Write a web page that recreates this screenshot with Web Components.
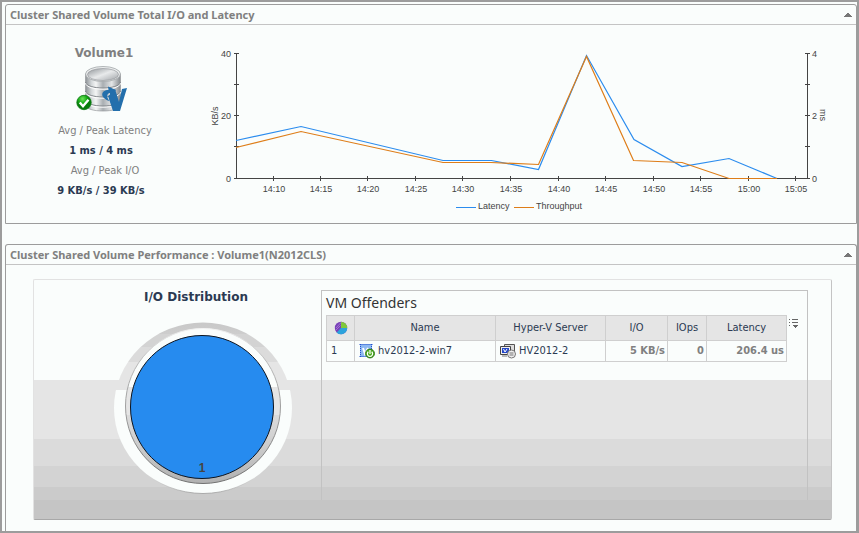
<!DOCTYPE html>
<html lang="en">
<head>
<meta charset="utf-8">
<title>Cluster Shared Volume</title>
<style>
  html { height: 100%; }
  body { margin: 0; min-height: 100%; display: grid; background: #fafdfc; color: #2b3a52;
    font: 11px/14px "DejaVu Sans Condensed", "DejaVu Sans", sans-serif; }
</style>
</head>
<body>
<csv-dashboard></csv-dashboard>

<script>
function define(name, html) {
  const template = document.createElement('template');
  template.innerHTML = '<style>*{box-sizing:border-box}</style>' + html;
  customElements.define(name, class extends HTMLElement {
    constructor() {
      super();
      this.attachShadow({ mode: 'open' }).append(template.content.cloneNode(true));
    }
  });
}

define('csv-panel', `
<style>
  :host { display: flex; flex-direction: column; box-sizing: border-box; border: 1px solid #9c9c9c;
    border-radius: 3px 3px 0 0; min-width: 0; }
  header { display: flex; align-items: center; justify-content: space-between; height: 20px;
    padding: 0 4px; border-bottom: 1px solid #c4c4c4; }
  h2 { margin: 0; font: bold 11px/16px "Noto Sans", sans-serif; color: #808080; }
  button { display: grid; place-items: center; width: 16px; height: 16px; margin: 0 -4px 0 0; padding: 0;
    border: 0; background: none; }
  .body { flex: 1; display: grid; }
</style>
<header><h2><slot name="title"></slot></h2>
  <button aria-label="Collapse"><svg width="8" height="4" viewBox="0 0 8 4" shape-rendering="crispEdges"><path d="M3 0h2v1h1v1h1v1h1v1H0V3h1V2h1V1h1z" fill="#777"/></svg></button></header>
<div class="body"><slot></slot></div>`);

define('csv-volume-icon', `
<style>:host { display: block; height: 49px; } svg { display: block; }</style>
<svg width="52" height="49" viewBox="0 0 52 49" aria-hidden="true">
  <defs>
    <linearGradient id="m"><stop offset="0" stop-color="#8d9296"/><stop offset=".18" stop-color="#d6dadc"/><stop offset=".3" stop-color="#f4f5f5"/><stop offset=".5" stop-color="#a9aeb2"/><stop offset=".75" stop-color="#e4e6e7"/><stop offset="1" stop-color="#85898d"/></linearGradient>
    <linearGradient id="t" x2="1" y2="1"><stop offset="0" stop-color="#8f9498"/><stop offset=".5" stop-color="#e8eaeb"/><stop offset="1" stop-color="#a0a4a8"/></linearGradient>
    <radialGradient id="g" cx=".4" cy=".25"><stop offset="0" stop-color="#6fe45a"/><stop offset=".6" stop-color="#18ab18"/><stop offset="1" stop-color="#087c0c"/></radialGradient>
  </defs>
  <path d="M9.500 9v31c0 8 35 8 35 0V9z" fill="url(#m)" stroke="#96999c" stroke-width=".7"/>
  <path d="M9.500 17c1 8 34 8 35 0M9.500 26c1 8 34 8 35 0M9.500 35c1 8 34 8 35 0" fill="none" stroke="#85898d" stroke-width="1"/>
  <path d="M9.500 18.200c1 8 34 8 35 0M9.500 27.200c1 8 34 8 35 0M9.500 36.200c1 8 34 8 35 0" fill="none" stroke="#fff" stroke-width="1"/>
  <ellipse cx="27" cy="9" rx="17.500" ry="7.500" fill="#eceeee" stroke="#a0a4a7" stroke-width=".8"/>
  <ellipse cx="27" cy="9.500" rx="15.500" ry="6" fill="url(#t)" stroke="#8d9195" stroke-width=".6"/>
  <path d="M32 21.500l8 3.500-6 6v-3c-3 0-4 4-.500 8-10-3-9-11-1-11z" fill="#236fac"/>
  <path d="M32 31l4-3 3-4 4 13 3-13 5-1-7 23h-7z" fill="#236fac"/>
  <circle cx="8" cy="37.500" r="7.200" fill="url(#g)" stroke="#0a7a10" stroke-width=".8"/>
  <path d="M3.800 37.500l3.200 3.700 5.500-6.500" fill="none" stroke="#fff" stroke-width="2.400"/>
</svg>`);

define('csv-volume-summary', `
<style>
  :host { display: flex; flex-direction: column; align-items: center; padding: 20px 4px 0 0; }
  h3 { margin: 0 0 4px; font: bold 12px/16px "DejaVu Sans", sans-serif; color: #808080; }
  csv-volume-icon { margin: 0 4px 7px 0; }
  dl { margin: 0; padding-right: 6px; text-align: center; line-height: 20px; }
  dt { color: #808080; padding-left: 8px; }
  dd { margin: 0; font-weight: bold; }
</style>
<h3>Volume1</h3>
<csv-volume-icon></csv-volume-icon>
<dl><dt>Avg / Peak Latency</dt><dd>1 ms / 4 ms</dd><dt>Avg / Peak I/O</dt><dd>9 KB/s / 39 KB/s</dd></dl>`);

define('csv-line-chart', `
<style>
  :host { display: block; min-width: 0; }
  svg { display: block; width: 100%; font: 9px "Liberation Sans", sans-serif; fill: #444; }
  .axis { fill: none; stroke: #444; shape-rendering: crispEdges; }
  .line { fill: none; stroke-width: 1.200; }
  .x, .unit { text-anchor: middle; } .l { text-anchor: end; }
</style>
<svg viewBox="206 25 650 198" role="img" aria-label="Latency and throughput">
  <path class="axis" d="M236.500 53v126M234 53.500h5M234 84.500h5M234 115.500h5M234 146.500h5M234 178.500h576M807.500 53v126M805 53.500h5M805 84.500h5M805 115.500h5M805 146.500h5M273.500 176v5M320.500 176v5M367.500 176v5M415.500 176v5M462.500 176v5M510.500 176v5M558.500 176v5M605.500 176v5M653.500 176v5M700.500 176v5M748.500 176v5M795.500 176v5"/>
  <path class="line" stroke="#2b8cee" d="M236 140.500L301 126.500 443 160.500H491.500L538.500 169.500 586.500 55.500 634 139.500 682 166.500 729 158.500 777 178.500"/>
  <path class="line" stroke="#de7d18" d="M236 147.500L301 131.500 443 162.500H491L538.500 164.500 586.500 56.500 633.500 160.500 682 162.500 729 178.500H777"/>
  <g class="l"><text x="231" y="57">40</text><text x="231" y="119">20</text><text x="231" y="182">0</text></g>
  <text x="812" y="57">4</text><text x="812" y="119">2</text><text x="812" y="182">0</text>
  <text class="unit" transform="translate(218 116) rotate(-90)">KB/s</text>
  <text class="unit" transform="translate(820 115) rotate(90)">ms</text>
  <g class="x"><text x="274" y="192">14:10</text><text x="321" y="192">14:15</text><text x="368" y="192">14:20</text><text x="416" y="192">14:25</text><text x="463" y="192">14:30</text><text x="511" y="192">14:35</text><text x="559" y="192">14:40</text><text x="606" y="192">14:45</text><text x="654" y="192">14:50</text><text x="701" y="192">14:55</text><text x="749" y="192">15:00</text><text x="796" y="192">15:05</text></g>
  <path d="M456 207.500h20" stroke="#2b8cee"/><text x="478" y="209">Latency</text>
  <path d="M514 207.500h20" stroke="#de7d18"/><text x="536" y="209">Throughput</text>
</svg>`);

define('csv-distribution', `
<style>
  :host { display: flex; flex-direction: column; align-items: center; padding-top: 8px; }
  h3 { margin: 0 0 15px; font: bold 12px/18px "DejaVu Sans", sans-serif; }
  svg { display: block; margin-left: 14px; }
</style>
<h3>I/O Distribution</h3>
<svg width="180" height="174" viewBox="113 321 180 174" role="img" aria-label="I/O distribution">
  <defs>
    <linearGradient id="o" gradientUnits="userSpaceOnUse" x1="0" y1="322" x2="0" y2="494">
      <stop offset="0" stop-color="#c8c8c8"/><stop offset=".07" stop-color="#cdcdcd"/><stop offset=".07" stop-color="#d3d3d3"/><stop offset=".145" stop-color="#d3d3d3"/><stop offset=".145" stop-color="#dbdbdb"/><stop offset=".23" stop-color="#dbdbdb"/><stop offset=".23" stop-color="#e5e5e5"/><stop offset=".395" stop-color="#e5e5e5"/><stop offset=".395" stop-color="#fafdfc"/><stop offset="1" stop-color="#fafdfc"/></linearGradient>
    <linearGradient id="i" gradientUnits="userSpaceOnUse" x1="0" y1="328" x2="0" y2="484">
      <stop offset="0" stop-color="#fafdfc"/><stop offset=".38" stop-color="#fafdfc"/><stop offset=".38" stop-color="#e5e5e5"/><stop offset=".56" stop-color="#e5e5e5"/><stop offset=".56" stop-color="#dbdbdb"/><stop offset=".68" stop-color="#d3d3d3"/><stop offset=".82" stop-color="#c5c5c5"/><stop offset="1" stop-color="#b0b0b0"/></linearGradient>
    <linearGradient id="e" x2="0" y2="1"><stop offset="0" stop-color="#f2f2f2"/><stop offset=".2" stop-color="#bbb"/><stop offset="1" stop-color="#707070"/></linearGradient>
    <linearGradient id="b" x2="0" y2="1"><stop offset=".9" stop-color="#c5c5c5" stop-opacity="0"/><stop offset="1" stop-color="#aaa"/></linearGradient>
  </defs>
  <ellipse cx="203" cy="408" rx="89" ry="85.500" fill="url(#o)" stroke="url(#b)"/>
  <circle cx="203" cy="406" r="77.500" fill="url(#i)" stroke="url(#e)"/>
  <circle cx="202" cy="407" r="71.500" fill="#268bef" stroke="#0c1420"/>
  <text x="202" y="472" text-anchor="middle" font-family="Liberation Sans, sans-serif" font-weight="bold" font-size="12" fill="#444">1</text>
</svg>`);

define('csv-offenders', `
<style>
  :host { display: block; box-sizing: border-box; padding: 3px 4px; border: 1px solid #c2c2c2; border-bottom: 0; }
  h3 { margin: 0 0 3px; font: 14px/18px "Noto Sans", sans-serif; color: #333; }
  .row { display: flex; gap: 2px; align-items: flex-start; padding-right: 4px; }
  table { flex: 1; border-collapse: collapse; table-layout: fixed; background: #fafdfc; }
  th, td { border: 1px solid #cfcfcf; padding: 0 4px; white-space: nowrap; }
  th { height: 25px; background: #e5e5e5; font-weight: normal; text-align: center; }
  td { height: 21px; }
  td.n { text-align: right; font-weight: bold; color: #808080; padding: 0 2px; }
  .name { display: flex; align-items: center; gap: 3px; }
  th svg, .name svg { display: block; margin: 0 auto; flex: none; } .name svg { margin: 0; }
  button { margin: 3px 0 0; padding: 0; border: 0; background: none; width: 10px; height: 11px; }
  button svg { display: block; }
</style>
<h3>VM Offenders</h3>
<div class="row">
<table>
  <colgroup><col style="width:28px"><col style="width:141px"><col style="width:110px"><col style="width:62px"><col style="width:39px"><col></colgroup>
  <thead><tr><th aria-label="Share"><svg width="14" height="14" viewBox="0 0 14 14"><circle cx="7" cy="7" r="6.200" fill="#7940b8"/><path d="M7 7V.8A6.200 6.200 0 0 1 13.200 7z" fill="#80c83c"/><path d="M7 7h6.200A6.200 6.200 0 0 1 2.600 11.400z" fill="#2ca3dc"/><path d="M2 7l5-5.500M1.500 9.500l5-5" stroke="#a274d2"/></svg></th>
  <th>Name</th><th>Hyper-V Server</th><th>I/O</th><th>IOps</th><th>Latency</th></tr></thead>
  <tbody><tr><td>1</td>
  <td><span class="name"><svg width="16" height="16" viewBox="0 0 16 16"><path fill="#8db8f2" d="M1 1h12v13H1z"/><path fill="none" stroke="#2450cc" stroke-dasharray="1 1" d="M.5 1.500h13M.5 13.500h13M1.500 1v13M12.500 1v13"/><path d="M4 5l2 6 3-6" fill="none" stroke="#fff" stroke-width="2"/><circle cx="11" cy="10.500" r="4.400" fill="#4fae22" stroke="#24720e"/><path d="M9.300 8.800a2.600 2.600 0 1 0 3.400 0M11 7v4" fill="none" stroke="#fff" stroke-width="1.200"/></svg>hv2012-2-win7</span></td>
  <td><span class="name"><svg width="16" height="16" viewBox="0 0 16 16"><path d="M4.500 1.500h10v8h-10z" fill="#ddd" stroke="#555"/><path d="M.5 3.500h10v8H.5z" fill="#eee" stroke="#444"/><path d="M2 5h7v5H2z" fill="#2448c8"/><path d="M3.500 6l1.500 3 2-3" fill="none" stroke="#fff"/><path d="M2 13h5" stroke="#777"/><circle cx="11.500" cy="11" r="4" fill="#eee" stroke="#777"/><path d="M9.500 10h4M9.500 12h4" stroke="#777"/></svg>HV2012-2</span></td>
  <td class="n">5 KB/s</td><td class="n">0</td><td class="n">206.4 us</td></tr></tbody>
</table>
<button aria-label="Table options"><svg width="10" height="10" viewBox="0 0 10 10" fill="#666" shape-rendering="crispEdges"><path d="M0 0h1v1H0zM3 0h6v1H3zM0 3h1v1H0zM3 3h6v1H3zM0 6h1v1H0zM4 6h5v1H8v1H7v1H6V8H5V7H4z"/></svg></button>
</div>`);

define('csv-performance', `
<style>
  :host { display: grid; grid-template-columns: 287px 1fr; box-sizing: border-box; margin: 14px 24px 11px 27px;
    padding: 0 23px 0 0; border: 1px solid #e2e2e2; border-right-color: #c4c4c4; border-bottom-color: #a8a8a8;
    border-radius: 2px;
    background: linear-gradient(#fafdfc 100px, #e5e5e5 100px 159px, #dbdbdb 159px 186px, #d3d3d3 186px 207px, #cbcbcb 207px 220px, #c5c5c5 220px); }
  csv-distribution { width: 324px; }
  csv-offenders { margin: 10px 0 19px; }
</style>
<csv-distribution></csv-distribution>
<csv-offenders></csv-offenders>`);

define('csv-dashboard', `
<style>
  :host { display: flex; flex-direction: column; gap: 20px; box-sizing: border-box; min-width: 0;
    border: 2px solid #9c9c9c; padding: 2px 0 0 3px; }
  .last { flex: 1; border-bottom: 0; }
  .top { display: grid; grid-template-columns: 200px 1fr; }
</style>
<csv-panel><span slot="title">Cluster Shared Volume Total I/O and Latency</span>
  <div class="top"><csv-volume-summary></csv-volume-summary><csv-line-chart></csv-line-chart></div></csv-panel>
<csv-panel class="last"><span slot="title">Cluster Shared Volume Performance : Volume1(N2012CLS)</span>
  <csv-performance></csv-performance></csv-panel>`);
</script>
</body>
</html>
